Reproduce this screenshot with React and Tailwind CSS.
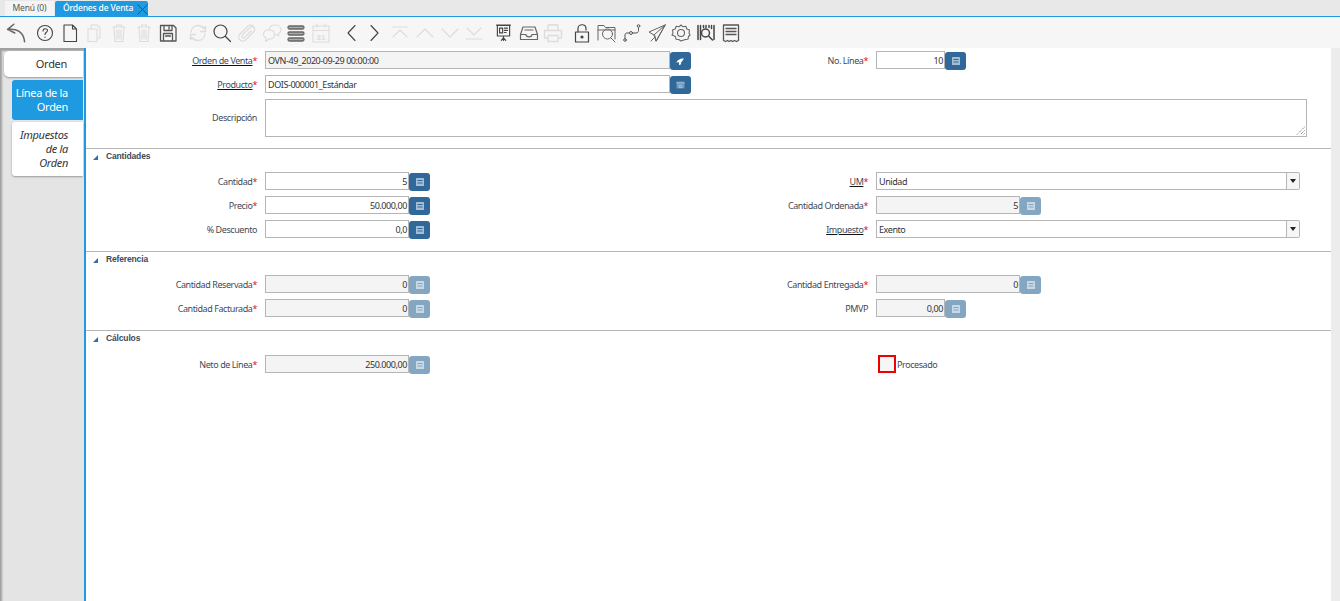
import React from "react";

const Ic = ({ c = "#444", w = 1.1, children, s = 24 }) => (
  <svg width={s} height={s} viewBox="0 0 24 24" fill="none" stroke={c} strokeWidth={w} strokeLinecap="round" strokeLinejoin="round">{children}</svg>
);
const D = "#dcdcdc";
const A = "#444";
const Trash = ({ c }) => (
  <Ic c={c}><path d="M6 6h12M9.500 6V4h5v2M7 6.500l1 14h8l1-14M10 9v9M12 9v9M14 9v9" /></Ic>
);
const Slot = ({ children, ml = 0 }) => (
  <div className="w-[24.7px] h-[24px] flex items-center justify-center shrink-0" style={{ marginLeft: ml }}>{children}</div>
);

const Toolbar = () => (
  <div className="h-[31px] bg-[#f6f6f6] flex items-center pl-[4px] shrink-0">
    <Slot><Ic c="#666" w={1.5} s={25}><path d="M3.500 9l6-5M3.500 9l7 3.500M3.500 9c9-1 15.500 2 16.500 12" /></Ic></Slot>
    <Slot ml={4}><Ic c={A}><circle cx="12" cy="12" r="7.500" /><path d="M10 10c0-3 4.500-3 4.500-.500 0 1.800-2.500 1.800-2.500 4M12 16v.500" /></Ic></Slot>
    <Slot><Ic c={A}><path d="M6 4h8.500L18.500 8v12.500H6zM14.500 4V8h4" /></Ic></Slot>
    <Slot><Ic c={D}><path d="M6 8h9v12.500H6zM9 8V4h6l3 3v10h-3" /></Ic></Slot>
    <Slot><Trash c={D} /></Slot>
    <Slot><Trash c={D} /></Slot>
    <Slot><Ic c="#555" w={1.3}><path d="M4.500 4.500h13l2.500 2.500v13H4.500zM8 4.500v5h8v-5M13 6v2M7.500 20v-7.500h9V20M9.500 15h5" /></Ic></Slot>
    <Slot ml={4.500}><Ic c={D} w={1.3}><path d="M5 11c.5-4 3.500-6.500 7-6.500 2.500 0 4.500 1 6 3l1.500-2v5h-5M19 13c-.5 4-3.500 6.500-7 6.500-2.500 0-4.500-1-6-3l-1.500 2v-5h5" /></Ic></Slot>
    <Slot><Ic c={A} w={1.2}><circle cx="10.500" cy="10.500" r="6.500" /><path d="M15.500 15.500L20.500 20.500" /></Ic></Slot>
    <Slot><Ic c={D} w={1.2}><path d="M18.500 5.500c-2-2-4.500-1.500-6 0L5 13c-2 2-1.500 4.500 0 6s4 1.500 5.500 0L19 10.500c1.300-1.300 1-3-.2-4s-2.800-1-4 .2L7.500 14c-.8 1-.8 2 0 2.500s1.700.5 2.500-.3L16 10" /></Ic></Slot>
    <Slot><Ic c={D}><path d="M9 8c1-3 3.500-4 6-4 3.500 0 6 2 6 4.500 0 2-1 3.500-3 4.500l1 2-3.500-1.500M3.500 13.500C3.500 10.500 6 9 9 9s5.500 1.500 5.500 4.500S12 18 9 18l-3.500 2.500.5-3.500c-1.500-.8-2.500-2-2.500-3.500z" /></Ic></Slot>
    <Slot><Ic c="#666" w={1.3}><rect x="4" y="5" width="16" height="3" rx="1.500" fill="#aaa" /><rect x="4" y="11" width="16" height="3" rx="1.500" fill="#aaa" /><rect x="4" y="17" width="16" height="3" rx="1.500" fill="#aaa" /></Ic></Slot>
    <Slot><Ic c={D}><path d="M4 5h16v16H4zM4 9.500h16M8 3v3M16 3v3" /><text x="12" y="19" fontSize="8" textAnchor="middle" fill={D} stroke="none" fontFamily="Liberation Sans" fontWeight="700">31</text></Ic></Slot>
    <Slot ml={5}><Ic c={A} w={1.1}><path d="M16 4.500l-7 7.500 7 7.500" /></Ic></Slot>
    <Slot><Ic c={A} w={1.1}><path d="M8 4.500l7 7.500-7 7.500" /></Ic></Slot>
    <Slot><Ic c={D}><path d="M4 6h16M5 16l7-7 7 7" /></Ic></Slot>
    <Slot><Ic c={D}><path d="M4 16l8-8 8 8" /></Ic></Slot>
    <Slot><Ic c={D}><path d="M4 8l8 8 8-8" /></Ic></Slot>
    <Slot><Ic c={D}><path d="M5 7l7 7 7-7M4 18h16" /></Ic></Slot>
    <Slot ml={5}><Ic c={A} w={1.3} s={21}><path d="M5 4h14v12H5zM12 16v5M9.500 21l2.500-3 2.500 3M4 3.500h16" /><path d="M7.500 7h3.500v5.500H7.500zM13 7h3.500M13 9.500h3.500M13 12h2" /></Ic></Slot>
    <Slot><Ic c="#666" w={1.2}><path d="M6 6h12l2.500 7.500V18.500H3.500v-5zM3.500 13.500H9c0 1.800 1.200 2.300 3 2.300s3-.5 3-2.300h5.500M8 9h8" /></Ic></Slot>
    <Slot><Ic c={D} w={1.3}><path d="M7 9V4h10v5M7 17H3.500V9.500h17V17H17M7 14.500h10V20.500H7z" /></Ic></Slot>
    <Slot ml={4.500}><Ic c={A} w={1.2}><rect x="5.500" y="11" width="13" height="10" /><path d="M8 11V7.500c0-5 8-5 8 0V9" /><circle cx="12" cy="16" r="1" fill={A} /></Ic></Slot>
    <Slot><Ic c="#666" w={1}><path d="M3 19V4.500h6l1.500 2H20V18M3 9h17" /><circle cx="12.500" cy="13" r="5" /><path d="M16 17l4 4" /></Ic></Slot>
    <Slot><Ic c="#555" w={1}><circle cx="5" cy="19" r="1.300" /><path d="M5 17.500V14c0-1.500 1-2 2-2h2" /><circle cx="11" cy="12" r="1.500" /><path d="M13 12h3c1.500 0 2.500-1 2.500-2.500V7" /><circle cx="18.500" cy="5" r="1.300" /></Ic></Slot>
    <Slot><Ic c="#666" w={1}><path d="M20 4L4 11l5 3 2 6zM20 4L9 14M20 4l-9 16-1-5M6 20l3-3" /></Ic></Slot>
    <Slot><Ic c="#666" w={1.1}><path d="M12 4l2 1.800 2.800-.5 1 2.700 2.700 1-.5 3L21 14l-1.500 1.500-.5 2.700-2.700.3L12 20l-2.300-1.500-2.700-.3-.5-2.700L3 14l1-2-.5-3 2.700-1 1-2.700 2.800.5z" /><circle cx="12" cy="12" r="3.500" /></Ic></Slot>
    <Slot><Ic c="#444" w={1.5}><path d="M4 4.500v14M6.500 4.500v14M9.500 4.500v2M12 4.500v2M15 4.500v2M17.500 4.500v3M20 4.500v14" /><circle cx="11.500" cy="12" r="4" /><path d="M15 15.500l3.500 3.500" /></Ic></Slot>
    <Slot><Ic c="#555" w={1.3}><path d="M4.500 4h15v15.500l-2 1-2-1-1.800 1-1.700-1-1.800 1-1.700-1-2 1-2-1zM7 7.500h10M7 10.500h10M7 13.500h10" /></Ic></Slot>
  </div>
);

const Req = () => <span className="text-[#e8101a]">*</span>;

const Label = ({ text, u, req = true }) => (
  <div className="w-[171px] shrink-0 mt-[3px] text-right text-[#3f4a57]">
    <span className={u ? "underline decoration-[#111]" : ""}>{text}</span>
    {req && <Req />}
  </div>
);

const FieldBtn = ({ off, kind }) => (
  <div className={`w-[21px] h-[18px] rounded-[3px] flex items-center justify-center shrink-0 ${off ? "bg-[#83a6c3]" : "bg-[#2f6899]"}`}>
    {kind === "order" ? (
      <svg width="9" height="9" viewBox="0 0 9 9"><path d="M8 1.500C5 1 1 3 .5 5.500L3 5.300 3 8C5 8 5.500 6.500 5 5.500 6 4.500 7 3 8 1.500z" fill="#fff" /></svg>
    ) : kind === "prod" ? (
      <svg width="9" height="8" viewBox="0 0 9 8"><rect x=".5" y=".5" width="8" height="7" fill="#6f97ba" /><path d="M.5 2h8M3 4.500h3v2H3z" stroke="#a5bfd5" strokeWidth="1" fill="none" /></svg>
    ) : (
      <svg width="8" height="8" viewBox="0 0 8 8"><rect width="8" height="8" rx=".5" fill={off ? "#c8d8e5" : "#a5bed4"} /><path d="M1.500 2.500h5M1.500 5h5" stroke={off ? "#83a6c3" : "#2f6899"} strokeWidth="1" /></svg>
    )}
  </div>
);

const Num = ({ value, w = "w-[144px]", off }) => (
  <div className="flex items-start">
    <div className={`${w} h-[18px] -mt-[1px] border border-[#b5b5b5] text-right pr-[1px] leading-[18px] text-[#333] ${off ? "bg-[#f4f4f4]" : "bg-white"}`}>{value}</div>
    <FieldBtn off={off} />
  </div>
);

const Text = ({ value, off, kind }) => (
  <div className="flex items-start">
    <div className={`w-[405px] h-[18px] -mt-[1px] border border-[#b5b5b5] leading-[18px] pl-[2px] text-[#333] ${off ? "bg-[#f4f4f4]" : "bg-white"}`}>{value}</div>
    <FieldBtn kind={kind} />
  </div>
);

const Select = ({ value }) => (
  <div className="w-[424px] h-[18px] -mt-[1px] flex">
    <div className="flex-1 border border-[#b5b5b5] leading-[18px] pl-[2px] text-[#333] bg-white">{value}</div>
    <div className="w-[13px] border border-l-0 border-[#b5b5b5] rounded-r-[2px] bg-[#f6f6f6] flex items-center justify-center">
      <div className="w-0 h-0 border-l-[3px] border-r-[3px] border-t-[4px] border-l-transparent border-r-transparent border-t-[#222]" />
    </div>
  </div>
);

const Row = ({ left, right, className = "" }) => (
  <div className={`flex items-start h-[18px] ${className}`}>
    <div className="w-[611px] flex items-start shrink-0 gap-[8px]">{left}</div>
    {right && <div className="flex items-start gap-[8px]">{right}</div>}
  </div>
);

const Section = ({ title, first }) => (
  <div className={`border-t border-[#b5b5b5] h-[15px] flex items-center ${first ? "mt-[11px]" : "mt-[12px]"}`}>
    <div className="w-0 h-0 ml-[7px] mt-[3px] border-l-[5px] border-b-[5px] border-l-transparent border-b-[#2f6fb0]" />
    <span className="ml-[8px] font-bold text-[#3f4a57] text-[8.500px] leading-[12px] tracking-[-0.15px]" style={{ fontFamily: '"Liberation Sans", sans-serif' }}>{title}</span>
  </div>
);

const Form = () => (
  <div className="flex-1 bg-white pt-[4px] text-[9px] leading-[12px] tracking-[-0.42px]">
    <Row
      left={<><Label text="Orden de Venta" u /><Text value="OVN-49_2020-09-29 00:00:00" off kind="order" /></>}
      right={<><Label text="No. Línea" /><Num value="10" w="w-[69px]" /></>}
    />
    <Row
      className="mt-[6px]"
      left={<><Label text="Producto" u /><Text value="DOIS-000001_Estándar" kind="prod" /></>}
    />
    <div className="flex items-center gap-[8px] mt-[5px] h-[38px]">
      <div className="-mt-[4px]"><Label text="Descripción" req={false} /></div>
      <div className="w-[1042px] h-[38px] border border-[#b5b5b5] bg-white relative">
        <svg className="absolute right-[1px] bottom-[1px]" width="9" height="9" viewBox="0 0 9 9"><path d="M8.500 1L1 8.500M8.500 4.500L4.500 8.500M8.500 7.500L7.500 8.500" stroke="#666" strokeWidth="1" strokeDasharray="1 1" /></svg>
      </div>
    </div>

    <Section title="Cantidades" first />
    <Row className="mt-[10px]" left={<><Label text="Cantidad" /><Num value="5" /></>} right={<><Label text="UM" u /><Select value="Unidad" /></>} />
    <Row className="mt-[6px]" left={<><Label text="Precio" /><Num value="50.000,00" /></>} right={<><Label text="Cantidad Ordenada" /><Num value="5" off /></>} />
    <Row className="mt-[6px]" left={<><Label text="% Descuento" req={false} /><Num value="0,0" /></>} right={<><Label text="Impuesto" u /><Select value="Exento" /></>} />

    <Section title="Referencia" />
    <Row className="mt-[10px]" left={<><Label text="Cantidad Reservada" /><Num value="0" off /></>} right={<><Label text="Cantidad Entregada" /><Num value="0" off /></>} />
    <Row className="mt-[6px]" left={<><Label text="Cantidad Facturada" /><Num value="0" off /></>} right={<><Label text="PMVP" req={false} /><Num value="0,00" w="w-[69px]" off /></>} />

    <Section title="Cálculos" />
    <Row
      className="mt-[11px]"
      left={<><Label text="Neto de Línea" /><Num value="250.000,00" off /></>}
      right={<><div className="w-[171px]" /><div className="flex items-start ml-[2px]"><div className="w-[18px] h-[18px] -mt-[1px] border-2 border-[#f00000] bg-[#f6f6f6]" /><span className="ml-[1px] mt-[3px] text-[#3f4a57]">Procesado</span></div></>}
    />
  </div>
);

export default function App() {
  return (
    <div className="w-[1340px] h-[601px] overflow-hidden flex flex-col bg-[#ececec]" style={{ fontFamily: '"Noto Sans", sans-serif' }}>
      <div className="h-[16px] pt-[1px] bg-[#e8e8e8] flex pl-[5px] shrink-0 text-[8.500px] tracking-[-0.15px]">
        <div className="w-[49px] h-[15px] bg-[#f4f4f4] text-[#555] flex items-center justify-center">Menú (0)</div>
        <div className="w-[93px] h-[15px] ml-[1px] bg-[#1f9ae0] text-white flex items-center pl-[8px] font-medium rounded-t-[2px] relative">
          <span>Órdenes de Venta</span>
          <svg className="absolute right-[0px] top-[3px]" width="11" height="11" viewBox="0 0 11 11"><path d="M.5 .5l10 10M10.500 .5l-10 10" stroke="#23527a" strokeWidth="1" /></svg>
        </div>
      </div>
      <div className="h-[1px] bg-[#1f9ae0] shrink-0" />
      <Toolbar />
      <div className="flex flex-1 min-h-0">
        <div className="w-[84px] shrink-0 bg-[#e4e4e4] shadow-[inset_2px_3px_2px_#a0a0a0] pt-[3px] pl-[4px] pr-[1px] flex flex-col text-[11px] leading-[14px] tracking-[-0.3px]">
          <div className="h-[26px] pr-[16px] bg-white rounded-l-[5px] flex items-center justify-end text-[#333] shadow-[0_1px_2px_#999]">Orden</div>
          <div className="ml-[8px] mt-[3px] h-[40px] pr-[15px] text-right bg-[#1f9ae0] rounded-l-[3px] text-white flex items-center justify-end">
            <div>Línea de la<br />Orden</div>
          </div>
          <div className="ml-[8px] mt-[2px] h-[54px] pr-[15px] text-right bg-white rounded-l-[3px] text-[#333] italic flex items-center justify-end shadow-[0_1px_2px_#999]">
            <div>Impuestos<br />de la<br />Orden</div>
          </div>
        </div>
        <div className="w-[2px] bg-[#1f9ae0] shrink-0" />
        <Form />
        <div className="w-[9px] bg-[#ececec] shrink-0" />
      </div>
    </div>
  );
}
